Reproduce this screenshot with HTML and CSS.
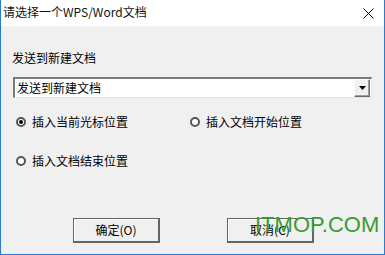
FILE: index.html
```html
<!DOCTYPE html>
<html>
<head>
<meta charset="utf-8">
<link rel="stylesheet" href="styles.css">
</head>
<body>
<div class="window">
  <div class="titlebar">
    <span class="title">请选择一个WPS/Word文档</span>
    <svg class="close" width="11" height="11" viewBox="0 0 11 11"><path d="M0.5 0.5 L10.5 10.5 M10.5 0.5 L0.5 10.5" stroke="#000" stroke-width="1"/></svg>
  </div>
  <div class="content">
    <div class="label">发送到新建文档</div>
    <div class="combo">
      <span class="combo-text">发送到新建文档</span>
      <span class="combo-btn"><svg width="7" height="4" viewBox="0 0 7 4"><path d="M0 0 H7 L3.5 4 Z" fill="#000"/></svg></span>
    </div>
    <div class="radio-row first">
      <label class="radio"><span class="dot checked"></span>插入当前光标位置</label>
      <label class="radio second"><span class="dot"></span>插入文档开始位置</label>
    </div>
    <div class="radio-row">
      <label class="radio"><span class="dot"></span>插入文档结束位置</label>
    </div>
    <div class="buttons">
      <div class="btn">确定(O)</div>
      <div class="btn">取消(C)</div>
    </div>
    <div class="watermark">ITMOP.COM</div>
  </div>
</div>
</body>
</html>
```
FILE: styles.css
```css
html, body {
  margin: 0;
  padding: 0;
}
body {
  width: 385px;
  height: 255px;
  overflow: hidden;
  font-family: "Noto Sans CJK SC", "Liberation Sans", sans-serif;
  font-size: 12px;
  color: #000;
}
.window {
  width: 385px;
  height: 255px;
  box-sizing: border-box;
  border: 1px solid #2b7bd0;
  border-top: none;
  background: #f0f0f0;
  display: flex;
  flex-direction: column;
  position: relative;
}
.titlebar {
  height: 26px;
  background: #fff;
  display: flex;
  align-items: center;
  justify-content: space-between;
  padding: 0 10px 0 2px;
  flex-shrink: 0;
}
.title {
  font-family: "Noto Sans CJK SC", "Liberation Sans", sans-serif;
  font-size: 12px;
  line-height: 14px;
  color: #111;
  position: relative;
  top: -1px;
}
.close {
  display: block;
}
.content {
  flex: 1;
  padding: 0 0 0 11px;
  position: relative;
}
.label {
  margin-top: 25px;
  line-height: 14px;
  height: 14px;
}
.combo {
  margin-top: 12px;
  width: 359px;
  height: 21px;
  box-sizing: border-box;
  margin-left: 1px;
  background: #fff;
  border-top: 2px solid #7a7a7a;
  border-left: 2px solid #7a7a7a;
  border-bottom: 1px solid #e3e3e3;
  border-right: 1px solid #e3e3e3;
  display: flex;
  align-items: center;
  justify-content: space-between;
}
.combo-text {
  padding-left: 2px;
  line-height: 14px;
}
.combo-btn {
  width: 16px;
  height: 18px;
  box-sizing: border-box;
  background: #f0f0f0;
  border-top: 1px solid #fff;
  border-left: 1px solid #fff;
  border-right: 1px solid #6a6a6a;
  border-bottom: 1px solid #6a6a6a;
  box-shadow: inset -1px -1px 0 #a0a0a0;
  display: flex;
  align-items: center;
  justify-content: center;
  margin-right: 1px;
}
.combo-btn svg {
  display: block;
}
.radio-row {
  display: flex;
  height: 14px;
  align-items: center;
}
.radio-row.first {
  margin-top: 17px;
}
.radio-row + .radio-row {
  margin-top: 25px;
}
.radio {
  display: flex;
  align-items: center;
  line-height: 14px;
  margin-left: 4px;
}
.radio.second {
  margin-left: 62px;
}
.dot {
  width: 10px;
  height: 10px;
  box-sizing: border-box;
  border-radius: 50%;
  border: 2px solid #555;
  background: #fff;
  margin-right: 6px;
  position: relative;
}
.dot.checked::after {
  content: "";
  position: absolute;
  left: 1px;
  top: 1px;
  width: 4px;
  height: 4px;
  border-radius: 50%;
  background: #000;
}
.buttons {
  display: flex;
  margin-top: 50px;
  margin-left: 61px;
  gap: 67px;
}
.btn {
  width: 87px;
  height: 25px;
  box-sizing: border-box;
  border: 1px solid #646464;
  border-right-width: 2px;
  border-bottom-width: 2px;
  box-shadow: inset 1px 1px 0 #fff;
  background: #f0f0f0;
  display: flex;
  align-items: center;
  justify-content: center;
  line-height: 14px;
}
.watermark {
  position: absolute;
  left: 254px;
  top: 187px;
  font-family: "Liberation Sans", Arial, sans-serif;
  font-size: 22px;
  line-height: 24px;
  color: #3c9a34;
}
```
